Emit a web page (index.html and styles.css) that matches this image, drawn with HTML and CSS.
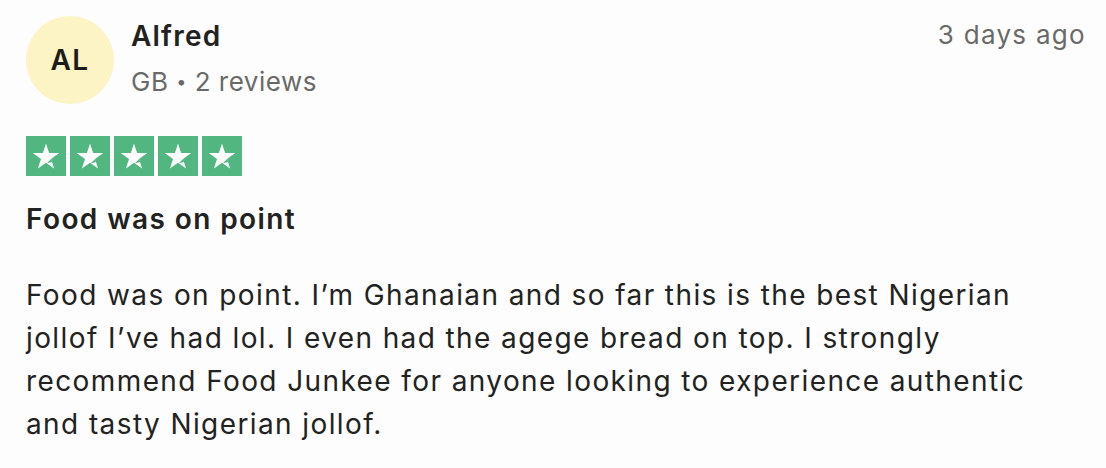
FILE: index.html
```html
<!DOCTYPE html>
<html lang="en">
<head>
<meta charset="utf-8">
<link rel="stylesheet" href="styles.css">
</head>
<body>
<article class="review">
  <header class="head">
    <div class="avatar">AL</div>
    <div class="who">
      <div class="name">Alfred</div>
      <div class="meta">GB <span class="dot">•</span> 2 reviews</div>
    </div>
    <time class="date">3 days ago</time>
  </header>
  <div class="stars">
    <span class="star"><svg viewBox="0 0 40 40"><path d="M20 7.5l3.1 9.6h10.1l-8.2 5.9 3.1 9.6-8.1-5.9-8.1 5.9 3.1-9.6-8.2-5.9h10.1z" fill="#fff"/><path d="M25.1 23l1 3.1-5.3 1.2z" fill="#52b681"/></svg></span>
    <span class="star"><svg viewBox="0 0 40 40"><path d="M20 7.5l3.1 9.6h10.1l-8.2 5.9 3.1 9.6-8.1-5.9-8.1 5.9 3.1-9.6-8.2-5.9h10.1z" fill="#fff"/><path d="M25.1 23l1 3.1-5.3 1.2z" fill="#52b681"/></svg></span>
    <span class="star"><svg viewBox="0 0 40 40"><path d="M20 7.5l3.1 9.6h10.1l-8.2 5.9 3.1 9.6-8.1-5.9-8.1 5.9 3.1-9.6-8.2-5.9h10.1z" fill="#fff"/><path d="M25.1 23l1 3.1-5.3 1.2z" fill="#52b681"/></svg></span>
    <span class="star"><svg viewBox="0 0 40 40"><path d="M20 7.5l3.1 9.6h10.1l-8.2 5.9 3.1 9.6-8.1-5.9-8.1 5.9 3.1-9.6-8.2-5.9h10.1z" fill="#fff"/><path d="M25.1 23l1 3.1-5.3 1.2z" fill="#52b681"/></svg></span>
    <span class="star"><svg viewBox="0 0 40 40"><path d="M20 7.5l3.1 9.6h10.1l-8.2 5.9 3.1 9.6-8.1-5.9-8.1 5.9 3.1-9.6-8.2-5.9h10.1z" fill="#fff"/><path d="M25.1 23l1 3.1-5.3 1.2z" fill="#52b681"/></svg></span>
  </div>
  <h2 class="title">Food was on point</h2>
  <p class="body">Food was on point. I’m Ghanaian and so far this is the best Nigerian<br>jollof I’ve had lol. I even had the agege bread on top. I strongly<br>recommend Food Junkee for anyone looking to experience authentic<br>and tasty Nigerian jollof.</p>
</article>
</body>
</html>
```
FILE: styles.css
```css
html, body {
  margin: 0;
  padding: 0;
  background: #fdfdfd;
}
body {
  font-family: Inter, "Noto Sans", sans-serif;
  color: #222220;
}
.review {
  padding: 16px 20px 0 26px;
}
.head {
  display: flex;
  align-items: flex-start;
}
.avatar {
  width: 88px;
  height: 88px;
  border-radius: 50%;
  background: #fcf4c4;
  display: flex;
  align-items: center;
  justify-content: center;
  font-size: 28px;
  font-weight: 600;
  letter-spacing: 1.5px;
  color: #1c1c1a;
  flex: none;
}
.who {
  margin-left: 17px;
  margin-top: 1px;
  flex: 1;
}
.name {
  font-size: 28px;
  font-weight: 600;
  letter-spacing: 1.2px;
  line-height: 38px;
}
.meta {
  margin-top: 11px;
  font-size: 26px;
  letter-spacing: 0.5px;
  line-height: 32px;
  color: #696a67;
}
.dot {
  font-size: 18px;
  vertical-align: 3px;
}
.date {
  font-size: 26px;
  letter-spacing: 1.3px;
  line-height: 38px;
  color: #696a67;
}
.stars {
  display: flex;
  gap: 4px;
  margin-top: 32px;
}
.star {
  width: 40px;
  height: 40px;
  background: #52b681;
  display: block;
}
.star svg {
  width: 40px;
  height: 40px;
  display: block;
}
.title {
  margin: 24px 0 0;
  font-size: 28px;
  font-weight: 600;
  letter-spacing: 1.4px;
  line-height: 38px;
}
.body {
  margin: 36px 0 0;
  font-size: 28px;
  letter-spacing: 1.4px;
  line-height: 43px;
}
```
